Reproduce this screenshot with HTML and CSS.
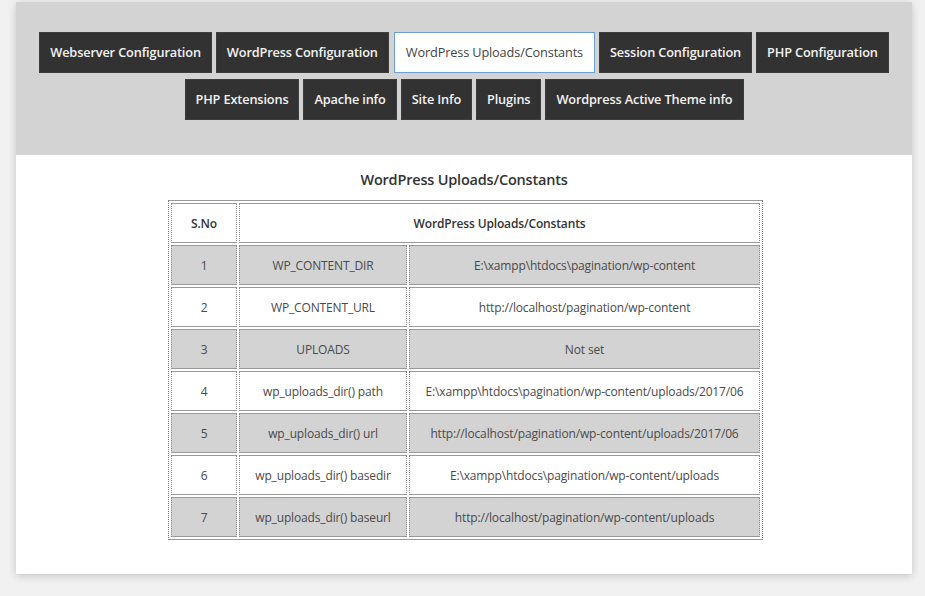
FILE: index.html
```html
<!DOCTYPE html>
<html>
<head>
<meta charset="utf-8">
<link rel="stylesheet" href="styles.css">
</head>
<body>
<div class="wrap">
  <div class="tabs">
    <div class="tab-row">
      <a class="tab">Webserver Configuration</a>
      <a class="tab">WordPress Configuration</a>
      <a class="tab active">WordPress Uploads/Constants</a>
      <a class="tab">Session Configuration</a>
      <a class="tab">PHP Configuration</a>
    </div>
    <div class="tab-row">
      <a class="tab">PHP Extensions</a>
      <a class="tab">Apache info</a>
      <a class="tab">Site Info</a>
      <a class="tab">Plugins</a>
      <a class="tab">Wordpress Active Theme info</a>
    </div>
  </div>
  <div class="content">
    <h3 class="title">WordPress Uploads/Constants</h3>
    <table class="info">
      <tr class="head">
        <th class="c1">S.No</th>
        <th colspan="2">WordPress Uploads/Constants</th>
      </tr>
      <tr class="odd"><td class="c1">1</td><td class="c2">WP_CONTENT_DIR</td><td class="c3">E:\xampp\htdocs\pagination/wp-content</td></tr>
      <tr><td class="c1">2</td><td class="c2">WP_CONTENT_URL</td><td class="c3">http://localhost/pagination/wp-content</td></tr>
      <tr class="odd"><td class="c1">3</td><td class="c2">UPLOADS</td><td class="c3">Not set</td></tr>
      <tr><td class="c1">4</td><td class="c2">wp_uploads_dir() path</td><td class="c3">E:\xampp\htdocs\pagination/wp-content/uploads/2017/06</td></tr>
      <tr class="odd"><td class="c1">5</td><td class="c2">wp_uploads_dir() url</td><td class="c3">http://localhost/pagination/wp-content/uploads/2017/06</td></tr>
      <tr><td class="c1">6</td><td class="c2">wp_uploads_dir() basedir</td><td class="c3">E:\xampp\htdocs\pagination/wp-content/uploads</td></tr>
      <tr class="odd"><td class="c1">7</td><td class="c2">wp_uploads_dir() baseurl</td><td class="c3">http://localhost/pagination/wp-content/uploads</td></tr>
    </table>
  </div>
</div>
</body>
</html>
```
FILE: styles.css
```css
html, body {
  margin: 0;
  padding: 0;
  background: #f1f1f1;
  font-family: "Open Sans", "Noto Sans", sans-serif;
}
body {
  padding: 2px 0 0 16px;
  height: 594px;
}
.wrap {
  width: 896px;
  background: #fff;
  box-shadow: 0 2px 8px rgba(0,0,0,0.18);
}
.tabs {
  background: #d3d3d3;
  padding: 30px 0 35px;
  display: flex;
  flex-direction: column;
  gap: 6px;
}
.tab-row {
  display: flex;
  justify-content: center;
  gap: 4px;
}
.tab {
  display: block;
  height: 41px;
  line-height: 39px;
  padding: 0 10px;
  background: #323232;
  color: #f2f2f2;
  font-size: 12.75px;
  font-weight: 600;
  box-sizing: border-box;
  border: 1px solid #3c3c3c;
  letter-spacing: -0.15px;
  white-space: nowrap;
}
.tab.active {
  background: #fff;
  color: #444;
  font-weight: 400;
  border: 1px solid #6a9fd2;
  padding: 0 11px;
  margin: 0 0 0 1px;
}
.content {
  padding: 15px 0 34px;
}
.title {
  margin: 0 0 10px;
  text-align: center;
  font-size: 14.5px;
  font-weight: 600;
  color: #333;
  line-height: 20px;
  letter-spacing: -0.2px;
}
.info {
  margin: 0 auto 0 152px;
  width: 595px;
  border-collapse: separate;
  border-spacing: 2px;
  border: 1px solid #999;
  border-left: 1px dotted #777;
  border-right: 1px dotted #777;
  font-size: 12px;
  color: #4a4a4a;
  letter-spacing: -0.15px;
}
.info th, .info td {
  height: 38px;
  text-align: center;
  border-top: 1px solid #999;
  border-bottom: 1px solid #999;
  border-left: 1px dotted #888;
  border-right: 1px dotted #888;
  padding: 0;
  background: #fff;
}
.info th {
  font-weight: 600;
  color: #333;
}
.info .odd td {
  background: #d3d3d3;
}
.c1 { width: 64px; }
.c2 { width: 166px; }
```
